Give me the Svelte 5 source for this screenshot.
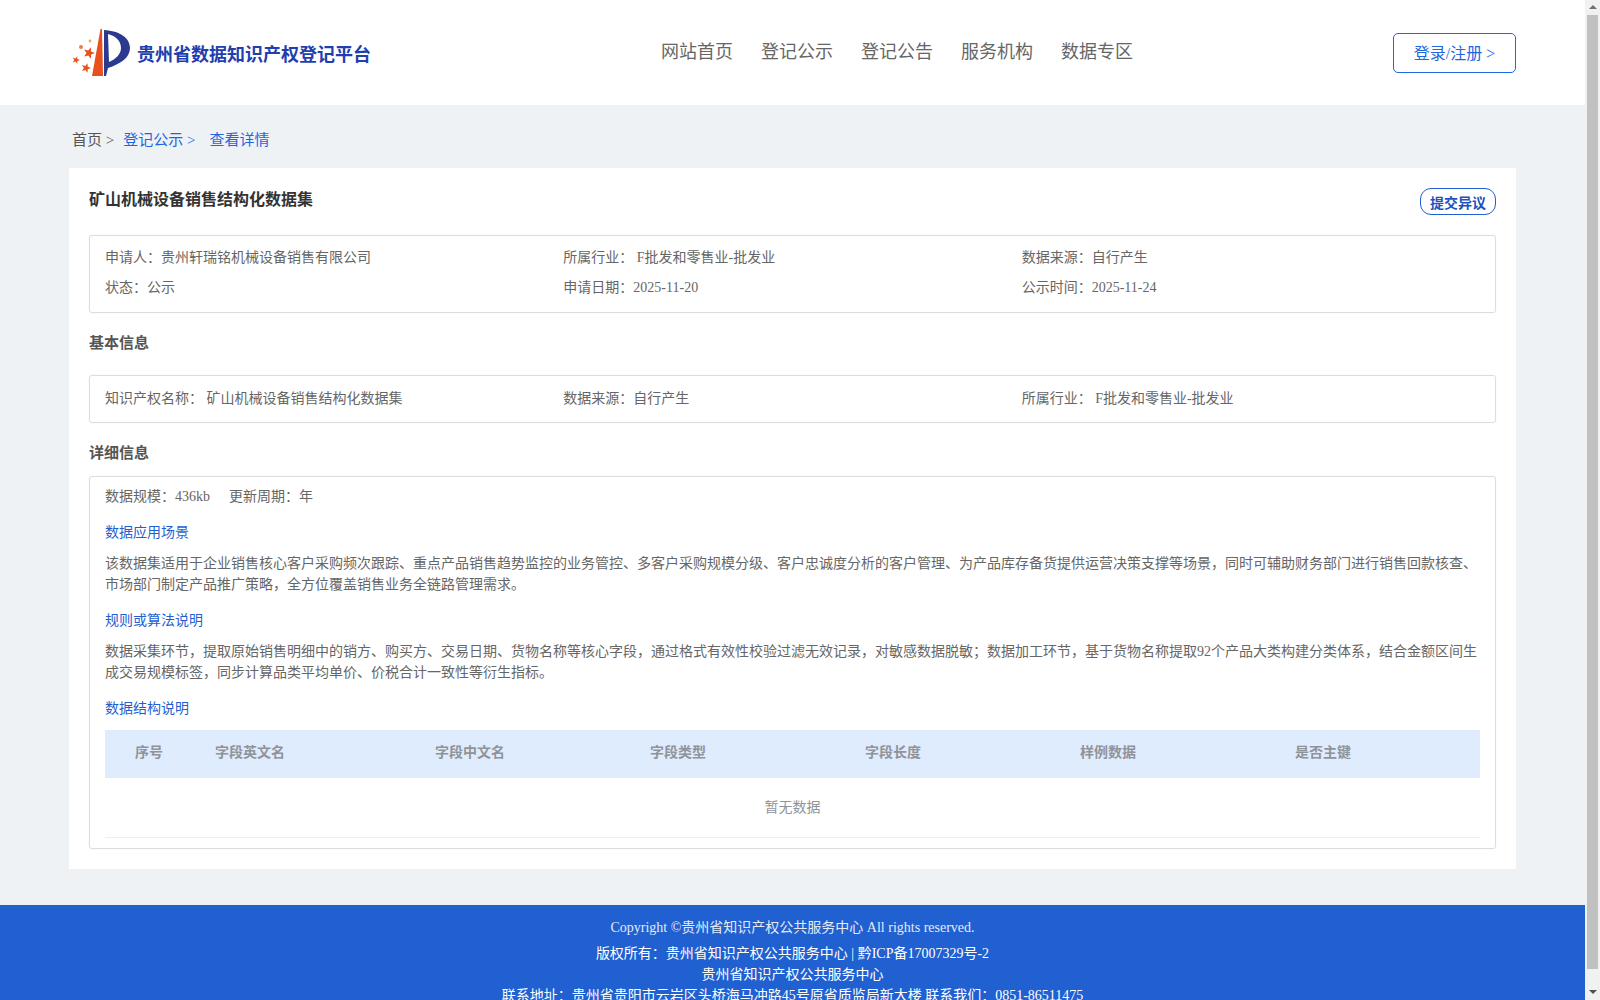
<script>
  const navItems = ["网站首页", "登记公示", "登记公告", "服务机构", "数据专区"];
  const columns = ["序号", "字段英文名", "字段中文名", "字段类型", "字段长度", "样例数据", "是否主键"];
  const stars = [
    { x: 19, y: 25, r: 6 },
    { x: 6, y: 32, r: 4 },
    { x: 16, y: 40, r: 5 }
  ];

  function starPoints(s) {
    let pts = [];
    for (let i = 0; i < 10; i++) {
      const rad = i % 2 === 0 ? s.r : s.r * 0.42;
      const a = -Math.PI / 2 + 0.3 + (i * Math.PI) / 5;
      pts.push((s.x + rad * Math.cos(a)).toFixed(1) + "," + (s.y + rad * Math.sin(a)).toFixed(1));
    }
    return pts.join(" ");
  }
</script>

<header>
  <div class="logo">
    <svg width="64" height="52" viewBox="0 0 64 52">
      <path d="M30.5 1 L32 1 L33 48 L22 48 Z" fill="#e8501c" />
      <path d="M34 2 C50 3 60 10 60 20 C60 30 50 36 38 40 L36 48 L34 48 Z M38 6 L39 34 C46 31 51 26 51 20 C51 13 46 8 38 6 Z" fill="#2b3a8f" fill-rule="evenodd" />
      {#each stars as s}
        <polygon points={starPoints(s)} fill="#e8501c" />
      {/each}
      <circle cx="11" cy="19" r="2" fill="#ee7a50" />
      <circle cx="20" cy="13" r="1.4" fill="#f0a080" />
    </svg>
    <span class="site-name">贵州省数据知识产权登记平台</span>
  </div>
  <nav>
    {#each navItems as item}
      <span>{item}</span>
    {/each}
  </nav>
  <button class="login">登录/注册 &gt;</button>
</header>

<main>
  <div class="crumbs">
    <span>首页 &gt;</span>
    <span class="link">登记公示 &gt;</span>
    <span class="link last">查看详情</span>
  </div>

  <section class="card">
    <div class="card-head">
      <h1>矿山机械设备销售结构化数据集</h1>
      <button class="objection">提交异议</button>
    </div>

    <div class="box info">
      <div>申请人：贵州轩瑞铭机械设备销售有限公司</div>
      <div>所属行业： F批发和零售业-批发业</div>
      <div>数据来源：自行产生</div>
      <div>状态：公示</div>
      <div>申请日期：2025-11-20</div>
      <div>公示时间：2025-11-24</div>
    </div>

    <h2>基本信息</h2>
    <div class="box basic">
      <div>知识产权名称： 矿山机械设备销售结构化数据集</div>
      <div>数据来源：自行产生</div>
      <div>所属行业： F批发和零售业-批发业</div>
    </div>

    <h2 class="detail-title">详细信息</h2>
    <div class="box detail">
      <div class="scale"><span>数据规模：436kb</span><span>更新周期：年</span></div>

      <h3>数据应用场景</h3>
      <p>该数据集适用于企业销售核心客户采购频次跟踪、重点产品销售趋势监控的业务管控、多客户采购规模分级、客户忠诚度分析的客户管理、为产品库存备货提供运营决策支撑等场景，同时可辅助财务部门进行销售回款核查、市场部门制定产品推广策略，全方位覆盖销售业务全链路管理需求。</p>

      <h3>规则或算法说明</h3>
      <p>数据采集环节，提取原始销售明细中的销方、购买方、交易日期、货物名称等核心字段，通过格式有效性校验过滤无效记录，对敏感数据脱敏；数据加工环节，基于货物名称提取92个产品大类构建分类体系，结合金额区间生成交易规模标签，同步计算品类平均单价、价税合计一致性等衍生指标。</p>

      <h3>数据结构说明</h3>
      <div class="table">
        <div class="thead">
          {#each columns as col}
            <span>{col}</span>
          {/each}
        </div>
        <div class="empty">暂无数据</div>
      </div>
    </div>
  </section>
</main>

<footer>
  <div class="copyright">Copyright ©贵州省知识产权公共服务中心 All rights reserved.</div>
  <div>版权所有：贵州省知识产权公共服务中心 | 黔ICP备17007329号-2</div>
  <div>贵州省知识产权公共服务中心</div>
  <div>联系地址：贵州省贵阳市云岩区头桥海马冲路45号原省质监局新大楼 联系我们：0851-86511475</div>
</footer>

<!-- the browser's own scrollbar does not show up in the headless shot -->
<aside class="scrollbar">
  <span class="arrow up"></span>
  <span class="thumb"></span>
  <span class="arrow down"></span>
</aside>

<style>
  :global(body) {
    background: #eff2f5;
    font-family: "Liberation Serif", "Noto Sans CJK SC", serif;
    font-size: 14px;
    color: #666;
    margin-right: 15px;
  }

  button {
    font-family: inherit;
    background: #fff;
    cursor: pointer;
  }

  header {
    height: 105px;
    background: #fff;
    display: flex;
    align-items: center;
    justify-content: space-between;
    padding: 0 69px 0 70px;
  }

  .logo {
    width: 331px;
    display: flex;
    align-items: center;
    gap: 3px;
  }

  .logo svg {
    flex: none;
    margin-top: 3px;
  }

  .site-name {
    font-size: 18px;
    font-weight: bold;
    color: #1e40af;
  }

  nav {
    display: flex;
    gap: 28px;
    font-size: 18px;
    color: #666;
    margin-top: -6px;
  }

  .login {
    width: 123px;
    height: 40px;
    border: 1px solid #1f66e0;
    border-radius: 5px;
    color: #1f66e0;
    font-size: 16px;
    padding: 0 0 2px;
  }

  .crumbs {
    display: flex;
    height: 63px;
    padding: 25px 71px 0 72px;
    box-sizing: border-box;
    line-height: 21px;
    font-size: 15px;
    gap: 9px;
    color: #555;
  }

  .link {
    color: #1f66e0;
  }

  .last {
    margin-left: 5px;
  }

  .card {
    margin: 0 69px;
    width: 1447px;
    box-sizing: border-box;
    background: #fff;
    padding: 20px 20px 20px 20px;
  }

  .card-head {
    display: flex;
    justify-content: space-between;
    align-items: flex-start;
    height: 47px;
  }

  h1 {
    margin: 1px 0 0;
    font-size: 16px;
    line-height: 22px;
    color: #333;
  }

  .objection {
    width: 76px;
    height: 27px;
    border: 1px solid #1f5fcf;
    border-radius: 11px;
    color: #1a52c0;
    font-size: 14px;
    font-weight: bold;
    padding: 0;
  }

  .box {
    border: 1px solid #ddd;
    border-radius: 3px;
    box-shadow: 0 0 1px #ddd;
    padding: 0 15px;
  }

  .info,
  .basic {
    display: grid;
    grid-template-columns: repeat(3, 1fr);
    line-height: 30px;
  }

  .info {
    padding-top: 7px;
    padding-bottom: 9px;
  }

  .basic {
    padding-top: 8px;
    padding-bottom: 8px;
  }

  h2 {
    margin: 0;
    font-size: 15px;
    line-height: 21px;
    color: #555;
    padding: 20px 0 21px;
  }

  .detail-title {
    padding: 20px 0 12px;
  }

  .detail {
    padding-top: 9px;
    padding-bottom: 10px;
    line-height: 21px;
  }

  .scale {
    display: flex;
    gap: 19px;
  }

  h3 {
    margin: 15px 0 10px;
    font-size: 14px;
    line-height: 21px;
    font-weight: normal;
    color: #1f5fcf;
  }

  p {
    margin: 0;
  }

  .table {
    margin-top: 11px;
    border-bottom: 1px solid #ebeef5;
  }

  .thead {
    display: grid;
    grid-template-columns: 80px 220px 215px 215px 215px 215px 1fr;
    padding: 0 0 4px 30px;
    box-sizing: border-box;
    height: 48px;
    align-items: center;
    background: #dfecfd;
    font-weight: bold;
    color: #909399;
  }

  .empty {
    height: 59px;
    display: flex;
    align-items: center;
    justify-content: center;
    color: #909399;
  }

  footer {
    margin-top: 36px;
    background: #2060d0;
    color: #fff;
    text-align: center;
    padding: 12px 0 10px;
    line-height: 21px;
  }

  .copyright {
    margin-bottom: 5px;
    color: #e4ebf8;
  }

  .scrollbar {
    position: fixed;
    top: 0;
    right: 0;
    bottom: 0;
    width: 15px;
    background: #f1f1f1;
    display: flex;
    flex-direction: column;
    align-items: center;
  }

  .thumb {
    width: 11px;
    flex: 1;
    background: #c1c1c1;
  }

  .arrow {
    flex: none;
    width: 0;
    height: 0;
    border-left: 4px solid transparent;
    border-right: 4px solid transparent;
  }

  .up {
    border-bottom: 4px solid #707070;
    margin: 5px 0 6px;
  }

  .down {
    border-top: 4px solid #505050;
    margin: 21px 0 6px;
  }
</style>
